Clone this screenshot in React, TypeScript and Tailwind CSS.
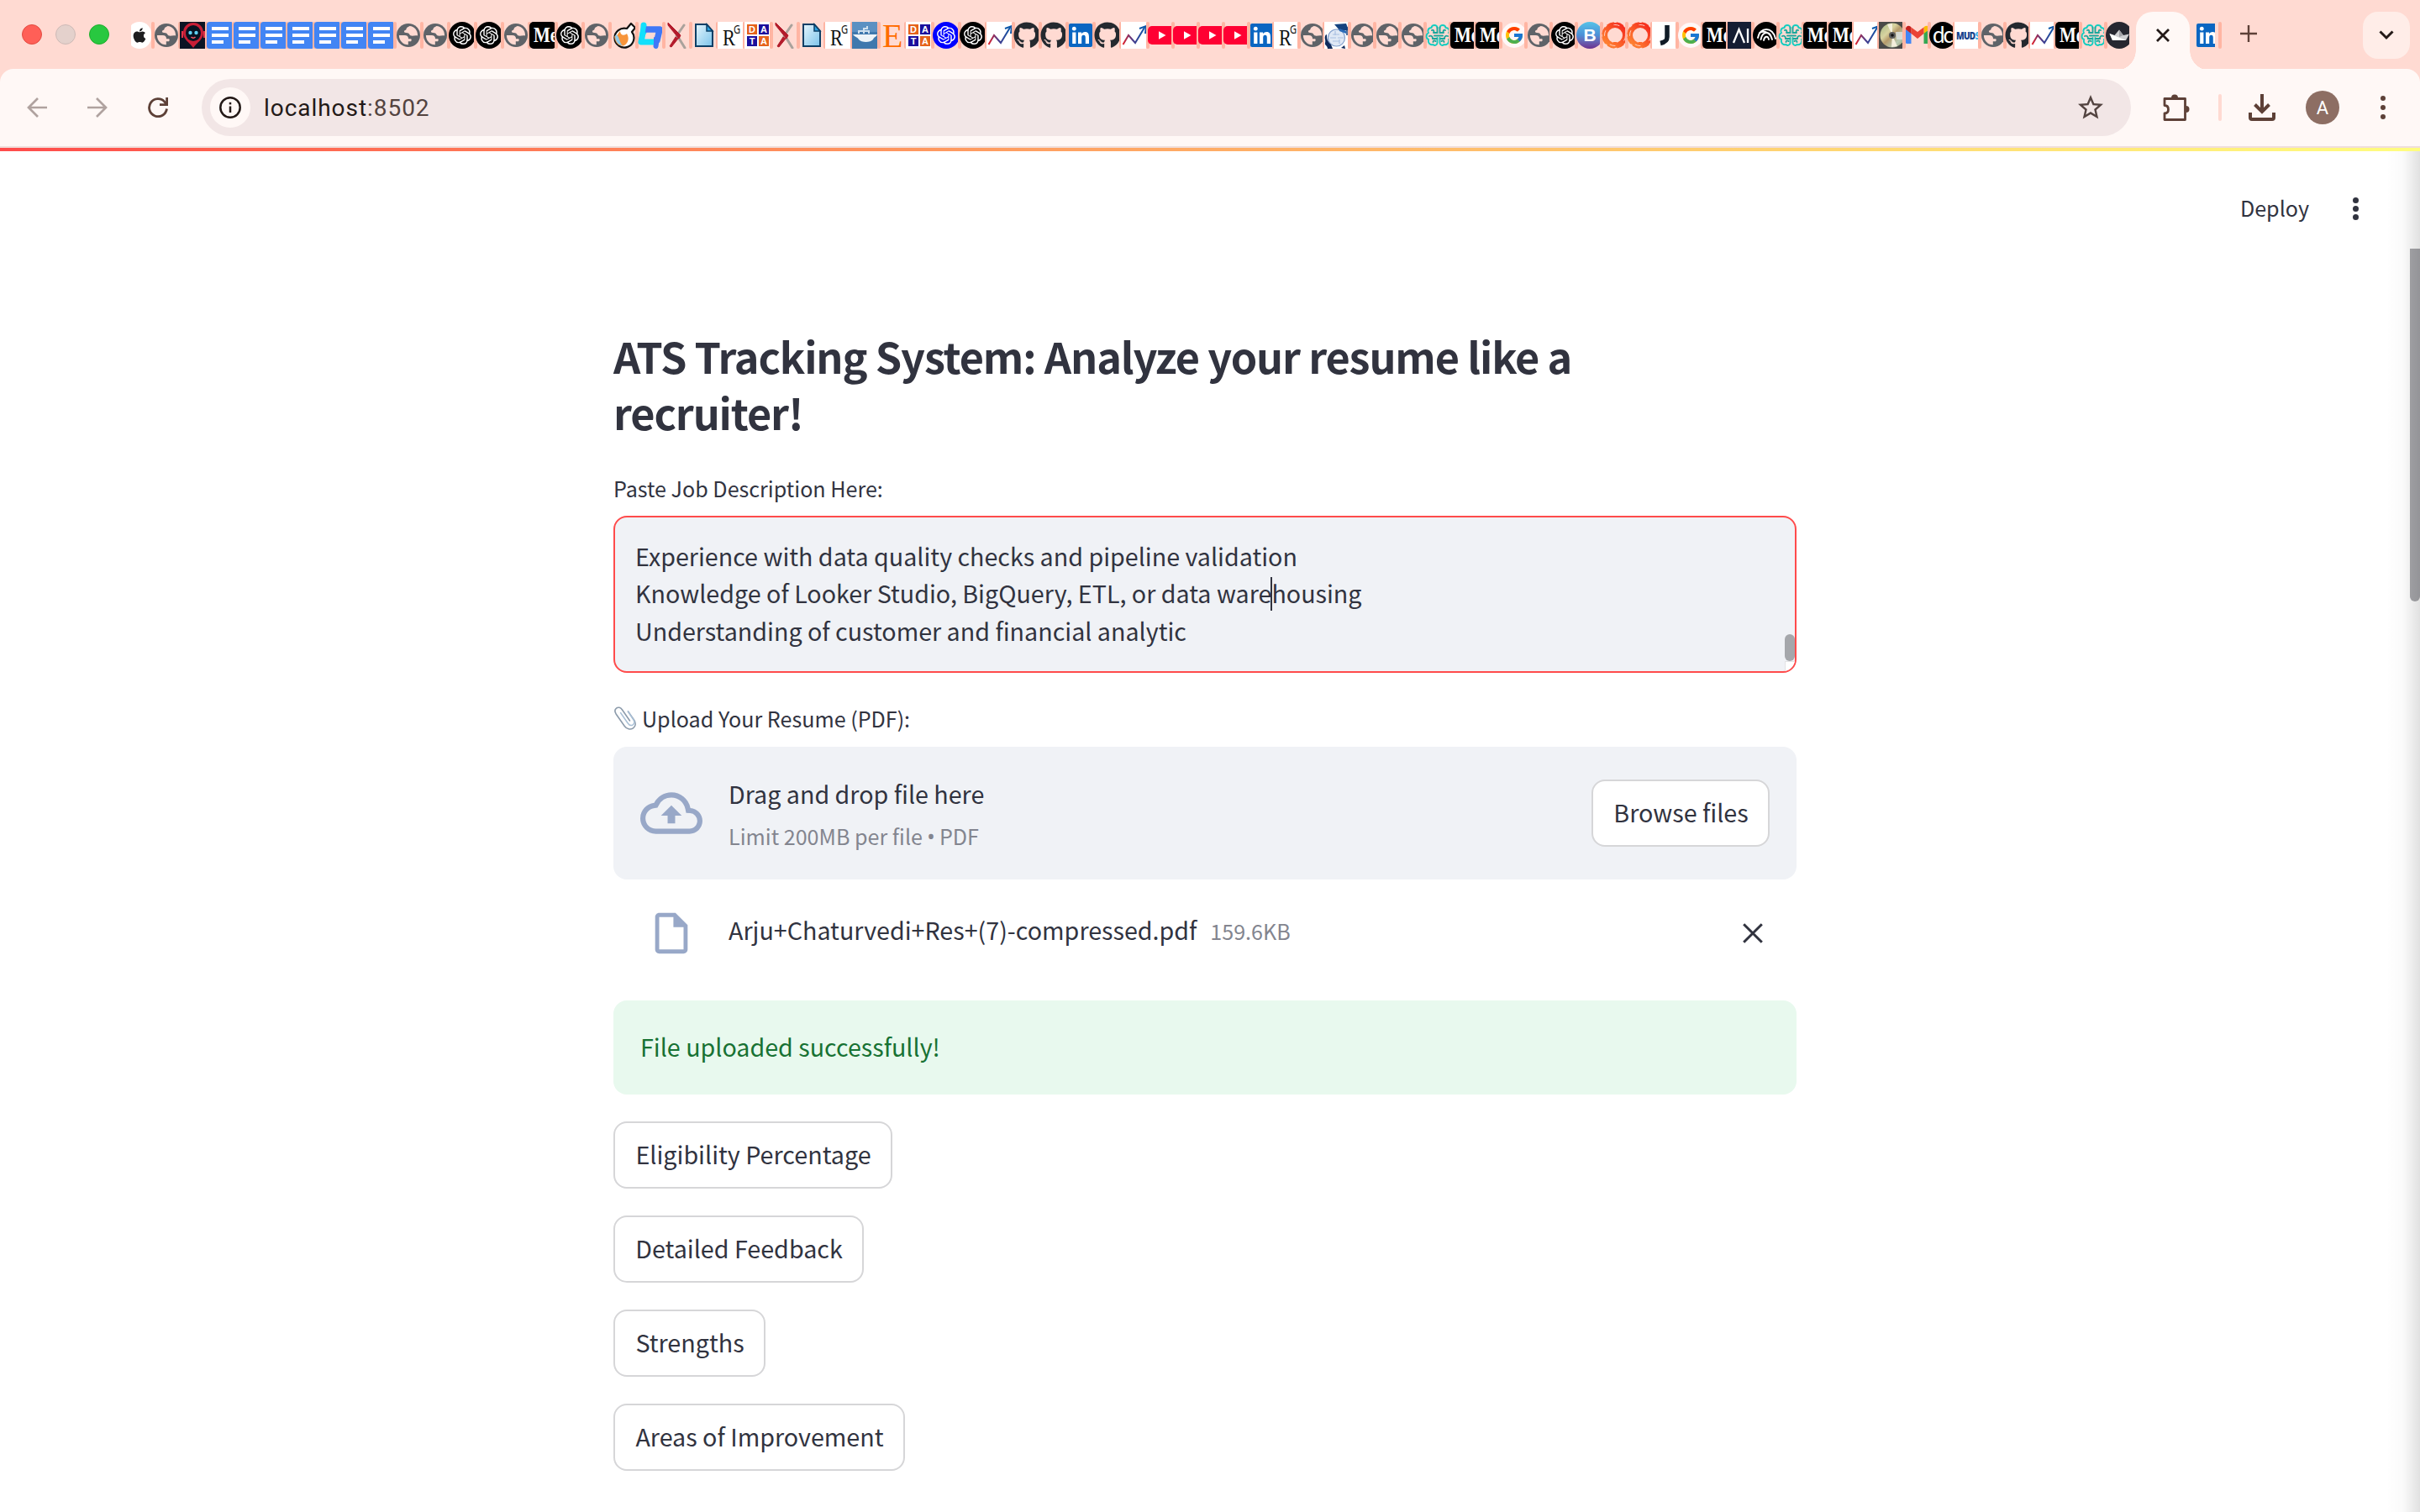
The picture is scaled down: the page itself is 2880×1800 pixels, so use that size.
import type { ReactNode } from 'react';
import { FaApple, FaGithub } from 'react-icons/fa';
import { FcGoogle } from 'react-icons/fc';
import { SiOpenai } from 'react-icons/si';
import { MdOutlineBackup, MdOutlineInsertDriveFile, MdStarOutline } from 'react-icons/md';

const SANS = "font-['Noto_Sans_CJK_SC',sans-serif]";

function Globe() {
  return (
    <svg viewBox="0 0 32 32" className="h-8 w-8">
      <circle cx="16" cy="16" r="14" fill="#5f6368" />
      <path d="M4.9 16h6.6c3 0 4.6 1.5 4.6 4.2h2.6c1.4 0 1.2 2.1.3 3.1h-3.200v3.900C10 27.400 5 22.800 4.900 16z" fill="#ffdad2" />
      <path d="M17.500 5c-2.600 1.200-4 2.400-4 3.700 0 1.200-2.600 1-2.600 2.600 0 1.700 1.400 1.900 4.100 1.900 2.400 0 2 2.900 4.400 3.400 2.400.5 4.600-1 7.700-.2C27.200 9.800 22.800 5.200 17.500 5z" fill="#ffdad2" />
    </svg>
  );
}

function AppleTab() {
  return (
    <div className="-ml-1 flex h-8 w-7 items-center justify-center rounded-full bg-white">
      <FaApple className="size-5 text-[#1d1d1f]" />
    </div>
  );
}

function Cyber() {
  return (
    <svg viewBox="0 0 32 32" className="h-8 w-8">
      <rect width="32" height="32" fill="#0b1424" />
      <path d="M16 1C8 1 4 7 4 13c0 8 7 11 12 18 5-7 12-10 12-18C28 7 24 1 16 1z" fill="#c81e36" />
      <ellipse cx="16" cy="13.500" rx="9" ry="9.500" fill="#071322" />
      <path d="M3 11v8M29 11v8" stroke="#e03348" strokeWidth="2" />
      <circle cx="12.500" cy="13" r="2.200" fill="#5fd0f5" />
      <circle cx="19.500" cy="13" r="2.200" fill="#5fd0f5" />
      <path d="M13.500 18q2.500 2.500 5 0" stroke="#ff5a6a" strokeWidth="1.500" fill="none" />
    </svg>
  );
}

function Docs() {
  return (
    <svg viewBox="0 0 32 32" className="h-8 w-8">
      <rect width="32" height="32" rx="3.500" fill="#4285f4" />
      <path d="M6 6h20v4H6zM6 14h20v4H6zM6 22h14v4H6z" fill="#fff" />
    </svg>
  );
}

function OpenAI({ blue = false }: { blue?: boolean }) {
  return (
    <div className={`flex h-8 w-8 shrink-0 items-center justify-center rounded-full ${blue ? 'bg-[#0000ff]' : 'bg-black'}`}>
      <SiOpenai className="size-[22px] text-white" />
    </div>
  );
}

function Medium() {
  return (
    <div className="h-8 w-8 shrink-0 overflow-hidden rounded-[5px] bg-black pl-[5px] font-['Liberation_Serif',serif] text-[21px] leading-8 font-bold text-white">
      <span className="block w-12 scale-y-120">Me</span>
    </div>
  );
}

function Flask() {
  return (
    <svg viewBox="0 0 32 32" className="h-8 w-8">
      <path d="M20 8l5-6 5 5-4 5a11.500 11.500 0 1 1-6-4z" fill="#fff" stroke="#111" strokeWidth="2.200" strokeLinejoin="round" />
      <path d="M5 17c3 2 4-3 7-6 0 5 5 6 8 3 3 5 2 11-3 14-6 2-11-2-12-11z" fill="#f7953b" />
      <path d="M6 16c3-1 4 2 5 5s2 6 4 7c-5 0-9-4-9-12z" fill="#8ecbea" />
    </svg>
  );
}

function CyanLoop() {
  return (
    <svg viewBox="0 0 32 32" className="h-8 w-8">
      <path d="M8 4v8M8 8L5 24h17" fill="none" stroke="#12e0fb" strokeWidth="7" strokeLinejoin="round" strokeLinecap="round" />
      <path d="M7 9h20l-3 13h-4" fill="none" stroke="#3f78f7" strokeWidth="7.500" strokeLinejoin="round" />
      <path d="M23.500 22l-1 7" fill="none" stroke="#3f78f7" strokeWidth="6" strokeLinecap="round" />
      <path d="M8 5L5 24h12" fill="none" stroke="#12e0fb" strokeWidth="6" strokeLinejoin="round" strokeLinecap="round" />
    </svg>
  );
}

function ArxivX() {
  return (
    <svg viewBox="0 0 32 32" className="h-8 w-8">
      <path d="M24 4L15 17M17 18l8 13" stroke="#aaa29c" strokeWidth="3" strokeLinecap="round" fill="none" />
      <path d="M5 1l15 15-2 4L5 4zM14 18l3 2L9 30l-2-1z" fill="#b31b2b" stroke="#b31b2b" strokeWidth="1" />
    </svg>
  );
}

function Page() {
  return (
    <svg viewBox="0 0 32 32" className="h-8 w-8">
      <defs>
        <linearGradient id="pg" x1="0" y1="0" x2="1" y2="1">
          <stop offset="0" stopColor="#e4f5fd" />
          <stop offset="1" stopColor="#7cc3ea" />
        </linearGradient>
      </defs>
      <path d="M6 3h13l7 8v18H6z" fill="url(#pg)" stroke="#0d3f66" strokeWidth="2" />
      <path d="M19 3v8h7z" fill="#2ba2e0" stroke="#0d3f66" strokeWidth="1.500" />
    </svg>
  );
}

function ResearchGate() {
  return (
    <div className="flex h-8 w-8 shrink-0 bg-white pl-1.5 font-['Liberation_Serif',serif] text-[#111]">
      <span className="w-[15px] origin-left scale-x-80 text-[28px] leading-[38px]">R</span>
      <span className="-ml-0.5 w-2 origin-left scale-x-80 font-['Noto_Sans',sans-serif] text-[14px] leading-[18px]">G</span>
    </div>
  );
}

function DataTiles() {
  return (
    <div className="grid h-8 w-8 shrink-0 grid-cols-[12px_12px] grid-rows-[12px_12px] content-center justify-center gap-0.5 bg-white text-center font-['Liberation_Sans',sans-serif] text-[11px] leading-3 font-bold text-white">
      <span className="bg-[#e5621b]">D</span>
      <span className="bg-[#1b0f9c]">A</span>
      <span className="bg-[#1b0f9c]">T</span>
      <span className="bg-[#e5621b]">A</span>
    </div>
  );
}

function Ship() {
  return (
    <svg viewBox="0 0 32 32" className="h-8 w-8">
      <rect width="32" height="32" fill="#3f78ad" />
      <rect width="32" height="12" fill="#5b90c2" />
      <path d="M1 15h29c-1 3-4 3-5 6-3 4-14 4-17 0-1-3-5-3-7-6z" fill="#eef4f8" />
      <path d="M14 14V8h4V5M8 14v-3h12v3" stroke="#cfe0ee" strokeWidth="2" fill="none" />
    </svg>
  );
}

function Elsevier() {
  return (
    <div className="h-8 w-8 shrink-0 pl-1 font-['Liberation_Serif',serif] text-[40px] leading-[34px] text-[#ff6c00]">E</div>
  );
}

function Chart() {
  return (
    <svg viewBox="0 0 32 32" className="h-8 w-8 bg-white">
      <defs>
        <linearGradient id="cg" x1="0" y1="0" x2="1" y2="0">
          <stop offset="0" stopColor="#e0212b" />
          <stop offset="0.450" stopColor="#4a3b8c" />
          <stop offset="1" stopColor="#0a56a8" />
        </linearGradient>
      </defs>
      <path d="M2.500 27L9 16l8 9L28.500 6" fill="none" stroke="url(#cg)" strokeWidth="2" />
      <path d="M22 8l8-3-1 9" fill="none" stroke="#0a56a8" strokeWidth="2" />
    </svg>
  );
}

function Github() {
  return <FaGithub className="size-8 shrink-0 text-[#24292f]" />;
}

function Linkedin() {
  return (
    <svg viewBox="0 0 32 32" className="h-8 w-8">
      <rect x="2" y="2" width="28" height="28" rx="2" fill="#0a66c2" />
      <path d="M6.200 12.500h4.200V26H6.200zM13 12.500h4v1.900c.8-1.400 2.200-2.300 4.200-2.300 4 0 4.800 2.700 4.800 6.200V26h-4.200v-6.800c0-1.600 0-3.500-2.200-3.500s-2.400 1.700-2.400 3.400V26H13z" fill="#fff" />
      <circle cx="8.300" cy="8.200" r="2.400" fill="#fff" />
    </svg>
  );
}

function Youtube() {
  return (
    <svg viewBox="0 0 32 32" className="h-8 w-8">
      <rect x="0" y="5" width="33" height="22" rx="5" fill="#ff0033" />
      <path d="M13 11.200v9.600l8.500-4.800z" fill="#fff" />
    </svg>
  );
}

function Scholar() {
  return (
    <svg viewBox="0 0 32 32" className="h-8 w-8">
      <rect width="32" height="32" fill="#fff" />
      <circle cx="14.500" cy="19" r="10" fill="#dfe8f5" stroke="#7f9dcb" strokeWidth="1.200" />
      <path d="M10 15h8M7 19h7M16 19h7M10 23h8M13 11v5M18 21v5" stroke="#a9bfe2" strokeWidth="1.200" />
      <path d="M12 3l14-1 3 8-10 1z" fill="#14427f" />
      <path d="M18 8l8 3v3l-8-3z" fill="#2a6ab8" />
      <path d="M27 6v10" stroke="#14427f" strokeWidth="1.500" />
      <path d="M1 17c1-2 2-3 2 0 0 5 2 7 5 10l2 5H4c0-4-4-4-3-7 1-3-1-5 0-8zM20 31l4-3 1 4z" fill="#0e2a5c" />
    </svg>
  );
}

function Brain() {
  return (
    <svg viewBox="0 0 32 32" className="h-8 w-8" fill="none" strokeWidth="1.900" strokeLinecap="round">
      <path d="M14.500 7c0-4-6.500-4-7 0-4 0-5 4-3.500 6C.5 15 1 20 4 21c-1 5 3 7 5.500 6 2 2 5 .5 5-2V19" stroke="#14cdc0" />
      <path d="M17.500 7c0-4 6.500-4 7 0 4 0 5 4 3.500 6 3.500 2 3 7 0 8 1 5-3 7-5.500 6-2 2-5 .5-5-2V19" stroke="#14cdc0" />
      <path d="M14.500 7v6h-4M17.500 7v6h4M11 16.500h10M8 10c2-1 3 1 2 3M24 10c-2-1-3 1-2 3M5 17c2-1 4 0 4 3h5M27 17c-2-1-4 0-4 3h-5M9.500 24c0-2 2-2 3-1M22.500 24c0-2-2-2-3-1" stroke="#1ba79c" />
    </svg>
  );
}

function Google() {
  return (
    <div className="flex h-8 w-8 shrink-0 items-center justify-center">
      <div className="flex size-[30px] items-center justify-center rounded-full bg-[#fff8f8]">
        <FcGoogle className="size-6" />
      </div>
    </div>
  );
}

function Bold() {
  return (
    <div className="h-8 w-8 shrink-0 rounded-full bg-linear-to-b from-[#55c3e8] via-[#4c8fd6] to-[#6b2f8f] text-center font-['Liberation_Sans',sans-serif] text-[21px] leading-8 font-bold text-white">
      B
    </div>
  );
}

function Ring() {
  return (
    <svg viewBox="0 0 32 32" className="h-8 w-8" fill="none">
      <defs>
        <linearGradient id="rg" x1="0" y1="1" x2="1" y2="0">
          <stop offset="0" stopColor="#ff8a33" />
          <stop offset="1" stopColor="#f4241c" />
        </linearGradient>
      </defs>
      <circle cx="16" cy="16" r="12" stroke="url(#rg)" strokeWidth="6" />
      <circle cx="16" cy="16" r="15" stroke="url(#rg)" strokeWidth="1.500" strokeDasharray="9 3" />
      <circle cx="16" cy="16" r="12.500" stroke="#ffdad2" strokeWidth="0.900" strokeDasharray="7 12" />
      <path d="M14 24h4v3h-4z" fill="#ff6a2a" />
    </svg>
  );
}

function JTab() {
  return (
    <svg viewBox="0 0 32 32" className="h-8 w-8 bg-white">
      <path d="M18 4v14c0 4-1.500 6-8 7.500" fill="none" stroke="#101b26" strokeWidth="5.500" />
    </svg>
  );
}

function AiTab() {
  return (
    <svg viewBox="0 0 32 32" className="h-8 w-8 bg-[#141d33]" fill="none" stroke="#fff" strokeWidth="2.300">
      <path d="M7 25l6.500-16L20 25M24 8v17" />
    </svg>
  );
}

function Waves() {
  return (
    <svg viewBox="0 0 32 32" className="h-8 w-8" fill="none" stroke="#fff" strokeWidth="1.900" strokeLinecap="round">
      <circle cx="16" cy="16" r="16" fill="#000" stroke="none" />
      <path d="M6 19C8 6 24 5 27 20M9.500 21c2-10 11-11 13-1M13 22c1-5 5-6 6-1M8 13c6-3 13 0 15 8" />
    </svg>
  );
}

function Disc() {
  return (
    <svg viewBox="0 0 32 32" className="h-8 w-8">
      <defs>
        <linearGradient id="dg" x1="0" y1="0" x2="1" y2="1">
          <stop offset="0" stopColor="#a3b884" />
          <stop offset="0.350" stopColor="#d8d3a0" />
          <stop offset="0.500" stopColor="#b59a6a" />
          <stop offset="0.750" stopColor="#b9ccb4" />
          <stop offset="1" stopColor="#8f8a5a" />
        </linearGradient>
      </defs>
      <rect width="32" height="32" fill="#4a4a48" />
      <circle cx="16" cy="16" r="14.500" fill="url(#dg)" />
      <path d="M16 16L10 3l6-1zM16 16l6 13-7 1z" fill="#f3efdc" />
      <path d="M20 12h9v9h-8z" fill="#dfe3e4" opacity="0.800" />
      <circle cx="16" cy="16" r="4" fill="#5c5c5c" />
      <circle cx="16" cy="16" r="1.800" fill="#111" />
    </svg>
  );
}

function Gmail() {
  return (
    <svg viewBox="0 0 32 32" className="h-8 w-8">
      <path d="M2 9v15.500A1.500 1.500 0 0 0 3.500 26H8.500V13z" fill="#4285f4" />
      <path d="M23.500 26h5a1.500 1.500 0 0 0 1.500-1.500V9l-6.500 4z" fill="#34a853" />
      <path d="M23.500 6.500V14l6.500-5V8c0-3-3.500-4.300-5.500-2.500z" fill="#fbbc04" />
      <path d="M8.500 14V6.500L16 12l7.500-5.500V14L16 20z" fill="#ea4335" />
      <path d="M2 8v1l6.500 5V6.500l-1-1C5.500 3.700 2 5 2 8z" fill="#c5221f" />
    </svg>
  );
}

function Dc() {
  return (
    <div className="h-8 w-8 shrink-0 rounded-full bg-black pl-1 font-['Lato',sans-serif] text-[26px] leading-[31px] tracking-[-2px] text-white">dc</div>
  );
}

function Muds() {
  return (
    <div className="h-8 w-8 shrink-0 bg-white pl-0.5 font-['Open_Sans',sans-serif] text-[10px] leading-8 font-extrabold tracking-[-0.700px] text-[#16408a]">
      <span className="block scale-y-120">MUD<span className="text-[#3fb5e8]">S</span></span>
    </div>
  );
}

function Crown() {
  return (
    <svg viewBox="0 0 32 32" className="h-8 w-8">
      <circle cx="16" cy="16" r="16" fill="#262730" />
      <path d="M4.500 14l6 2 5.500-6.500 5 6.500 7-1.500-4 7.500H8z" fill="#cfcfd2" />
      <path d="M4.500 14L24 22H8z" fill="#fff" />
      <path d="M16 9.500l5 6.500-5 2z" fill="#a0a0a5" />
    </svg>
  );
}

const wideTabs: ReactNode[] = [
  <Globe />, <Cyber />, <Docs />, <Docs />, <Docs />, <Docs />, <Docs />, <Docs />, <Docs />,
  <Globe />, <Globe />, <OpenAI />, <OpenAI />, <Globe />, <Medium />, <OpenAI />, <Globe />,
  <Flask />, <CyanLoop />, <ArxivX />, <Page />, <ResearchGate />, <DataTiles />, <ArxivX />,
  <Page />, <ResearchGate />, <Ship />, <Elsevier />, <DataTiles />, <OpenAI blue />, <OpenAI />,
  <Chart />, <Github />, <Github />, <Linkedin />, <Github />, <Chart />,
];

const narrowTabs: ReactNode[] = [
  <Youtube />, <Youtube />, <Youtube />, <Youtube />, <Linkedin />, <ResearchGate />, <Globe />,
  <Scholar />, <Globe />, <Globe />, <Globe />, <Brain />, <Medium />, <Medium />, <Google />,
  <Globe />, <OpenAI />, <Bold />, <Ring />, <Ring />, <JTab />, <Google />, <Medium />, <AiTab />,
  <Waves />, <Brain />, <Medium />, <Medium />, <Chart />, <Disc />, <Gmail />, <Dc />, <Muds />,
  <Globe />, <Github />, <Chart />, <Medium />, <Brain />, <Crown />,
];

function Tab({ children, narrow = false }: { children: ReactNode; narrow?: boolean }) {
  return (
    <div className={`flex h-8 shrink-0 ${narrow ? 'w-[30px]' : 'w-8'}`}>
      <div className="-mx-0.5 h-8 w-1 shrink-0 rounded-sm bg-[#ffb5a3]" />
      <div className={`relative h-8 shrink-0 overflow-hidden ${narrow ? 'w-7' : 'w-[30px]'}`}>
        <div className="flex w-8">{children}</div>
      </div>
    </div>
  );
}

function TabStrip() {
  return (
    <div className="flex h-[82px] w-full bg-[#ffdad2]">
      <div className="mt-[29px] ml-[26px] flex gap-4">
        <div className="size-6 rounded-full border border-[#e24b41] bg-[#ff5f57]" />
        <div className="size-6 rounded-full border border-[#cdbab6] bg-[#e4d1cc]" />
        <div className="size-6 rounded-full border border-[#1dad2b] bg-[#28c840]" />
      </div>
      <div className="mt-[26px] ml-[26px] w-[26px] overflow-hidden">
        <AppleTab />
      </div>
      <div className="mt-[26px] flex">
        {wideTabs.map((icon, i) => (
          <Tab key={i}>{icon}</Tab>
        ))}
        {narrowTabs.map((icon, i) => (
          <Tab key={i} narrow>{icon}</Tab>
        ))}
      </div>
      <div className="-mx-[18px] mt-3.5 flex items-end">
        <div className="h-[22px] w-6 bg-[radial-gradient(circle_at_0_0,transparent_23.500px,#fff8f6_24px)]" />
        <div className="flex h-[68px] w-16 items-center justify-center rounded-t-[20px] bg-[#fff8f6] pb-3">
          <svg viewBox="0 0 16 16" className="size-4" stroke="#231917" strokeWidth="2.800">
            <path d="M1 1l14 14M15 1L1 15" />
          </svg>
        </div>
        <div className="h-[22px] w-6 bg-[radial-gradient(circle_at_100%_0,transparent_23.500px,#fff8f6_24px)]" />
      </div>
      <div className="mt-[26px] flex">
        <div className="relative w-6 overflow-hidden">
          <div className="w-8"><Linkedin /></div>
        </div>
        <div className="ml-1 h-8 w-1 rounded-sm bg-[#ffb5a3]" />
      </div>
      <svg viewBox="0 0 20 20" className="mt-[30px] ml-[22px] size-5" stroke="#5d4037" strokeWidth="2.400">
        <path d="M10 0v20M0 10h20" />
      </svg>
      <div className="mt-3.5 mr-3 ml-auto flex size-14 items-center justify-center rounded-[18px] bg-[#ffede8]">
        <svg viewBox="0 0 18 12" className="h-3 w-[18px]" fill="none" stroke="#231917" strokeWidth="3">
          <path d="M1.500 1.500L9 9l7.500-7.500" />
        </svg>
      </div>
    </div>
  );
}

function Toolbar() {
  return (
    <div className="bg-[#ffdad2]">
      <div className="flex h-[92px] items-center rounded-t-[16px] bg-[#fff8f6]">
        <svg viewBox="0 0 24 24" className="ml-8 size-6" fill="none" stroke="#b0a29f" strokeWidth="2.700">
          <path d="M24 12H2M13 1L2 12l11 11" />
        </svg>
        <svg viewBox="0 0 24 24" className="ml-12 size-6" fill="none" stroke="#b0a29f" strokeWidth="2.700">
          <path d="M0 12h22M11 1l11 11-11 11" />
        </svg>
        <svg viewBox="0 0 24 24" className="ml-12 size-6" fill="none" stroke="#5d4037" strokeWidth="2.800">
          <path d="M22.500 13.500A10.500 10.500 0 1 1 20 5.300l2 2.700" />
          <path d="M22.600 0v8.600H14" />
        </svg>
        <div className="ml-10 flex h-[68px] w-[2296px] items-center rounded-full bg-[#f2e6e6] pr-[30px] pl-2.5">
          <div className="flex size-12 items-center justify-center rounded-full bg-[#fff8f6]">
            <svg viewBox="0 0 26 26" className="size-[26px]" fill="none" stroke="#231917" strokeWidth="2.500">
              <circle cx="13" cy="13" r="11.700" />
              <path d="M13 11.500V19" />
              <path d="M13 6.800v2.600" />
            </svg>
          </div>
          <div className="mt-0.5 ml-4 font-['Roboto',sans-serif] text-[28px] leading-10 tracking-[0.950px] text-[#231917]">
            localhost<span className="text-[#534340]">:8502</span>
          </div>
          <MdStarOutline className="ml-auto size-9 text-[#534340]" />
        </div>
        <svg viewBox="0 0 32 32" className="ml-[38px] size-8" fill="none">
          <path d="M2 5.500h24.500v25H2V23c3 0 4.500-2 4.500-4.700S5 13.500 2 13.500z" stroke="#5d4037" strokeWidth="2.800" strokeLinejoin="round" />
          <path d="M10 4.500a4 4 0 0 1 8 0zM27.500 14a4 4 0 0 1 0 8z" fill="#5d4037" />
        </svg>
        <div className="ml-[34px] h-8 w-1 rounded-sm bg-[#ffdad2]" />
        <svg viewBox="0 0 32 32" className="ml-8 size-8" fill="none" stroke="#5d4037" strokeWidth="4">
          <path d="M16 0v21M7.500 12.500L16 21l8.500-8.500" />
          <path d="M2 22v6q0 2 2 2h24q2 0 2-2v-6" />
        </svg>
        <div className="ml-9 size-10 rounded-full bg-[#8d6e63] text-center font-['Roboto',sans-serif] text-[22px] leading-[42px] text-white">A</div>
        <div className="ml-[49px] flex flex-col gap-[5px]">
          <div className="size-1.5 rounded-full bg-[#5d4037]" />
          <div className="size-1.5 rounded-full bg-[#5d4037]" />
          <div className="size-1.5 rounded-full bg-[#5d4037]" />
        </div>
      </div>
      <div className="h-0.5 bg-[#f0dedb]" />
    </div>
  );
}

function Paperclip() {
  return (
    <svg viewBox="0 0 28 28" className="size-7" fill="none" strokeLinecap="round">
      <path d="M19.500 17L10.500 4C8.500 1 5.500.5 3.500 2.200 1.500 3.800 1.500 6.500 3.300 9.200l10 14.300c2.500 3.500 7 4.500 10.200 2.300 3-2 3.500-5.800 1.300-9.300L17.500 6" stroke="#8c9bab" strokeWidth="1.600" />
      <path d="M17.500 6l6.500 10c1.500 2.500 1 4.500-.8 5.800-2 1.300-4.300.7-6-1.800L8.500 7.500" stroke="#a9c0d6" strokeWidth="1.500" />
    </svg>
  );
}

function ActionButton({ label, width }: { label: string; width: string }) {
  return (
    <button className={`flex h-20 shrink-0 items-center justify-center rounded-[16px] border-2 border-[#d6d6d8] bg-white pb-[3px] pl-px text-[28.700px] leading-[51px] whitespace-nowrap text-[#31333f] ${width}`}>
      {label}
    </button>
  );
}

export default function App() {
  return (
    <div className={`relative h-[1800px] w-[2880px] overflow-hidden bg-white text-[#31333f] ${SANS}`}>
      <TabStrip />
      <Toolbar />
      <div className="h-1 bg-linear-to-r from-[#ff4b4b] to-[#fffd80]" />
      <header className="flex h-[120px] items-start justify-end pr-[73px]">
        <span className="mt-[47px] text-[25.100px] leading-10">Deploy</span>
        <div className="mt-[54.500px] ml-[52px] flex flex-col gap-[3px]">
          <div className="size-[7px] rounded-full bg-[#31333f]" />
          <div className="size-[7px] rounded-full bg-[#31333f]" />
          <div className="size-[7px] rounded-full bg-[#31333f]" />
        </div>
      </header>

      <main className="ml-[730px] flex w-[1408px] flex-col">
        <h1 className="mt-[90px] text-[50.400px] leading-[67.200px] font-bold tracking-[-1.130px]">
          ATS Tracking System: Analyze your resume like a<br />recruiter!
        </h1>
        <label className="mt-[36.600px] text-[25.100px] leading-10">Paste Job Description Here:</label>
        <div className="relative mt-[13px] h-[187px] overflow-hidden rounded-[16px] border-2 border-[#ff4b4b] bg-[#f0f2f6] pt-[23.500px] pl-6 text-[28.670px] leading-[44.800px] whitespace-nowrap">
          <p>Experience with data quality checks and pipeline validation</p>
          <p>
            Knowledge of Looker Studio, BigQuery, ETL, or data ware
            <span className="-mx-px inline-block h-10 w-0.5 bg-[#31333f] align-[-9px] leading-none" />
            housing
          </p>
          <p>Understanding of customer and financial analytic</p>
          <div className="absolute right-0 bottom-3 h-8 w-3 rounded-full bg-[#a5a7ab]" />
          <div className="absolute right-0 bottom-0 h-3 w-3 border-t border-l border-[#e3e3e5] bg-white">
            <svg viewBox="0 0 12 12" className="size-3" stroke="#555" strokeWidth="1">
              <path d="M3 12L12 2M7 12l5-5" />
            </svg>
          </div>
        </div>

        <div className="mt-[34px] flex h-10 items-center gap-1.5 text-[25.100px] leading-10">
          <Paperclip />
          <span>Upload Your Resume (PDF):</span>
        </div>
        <section className="mt-3.5 flex h-[158px] items-center rounded-[16px] bg-[#f0f2f6] pr-8 pl-8">
          <MdOutlineBackup className="size-[74px] text-[#98a8c8]" />
          <div className="mt-1 ml-[31px]">
            <p className="text-[28.670px] leading-[51px]">Drag and drop file here</p>
            <p className="flex text-[25.100px] leading-[51px] text-[#83858f]">
              <span>Limit 200MB per file</span>
              <span className="w-5 text-center font-['Noto_Sans',sans-serif]">•</span>
              <span>PDF</span>
            </p>
          </div>
          <div className="ml-auto">
            <ActionButton label="Browse files" width="w-[212px]" />
          </div>
        </section>
        <div className="flex h-32 items-center pr-10">
          <MdOutlineInsertDriveFile className="ml-10 size-[58px] text-[#98a8c8]" />
          <span className="-mt-2.5 ml-[39px] text-[28.670px] leading-[51px]">Arju+Chaturvedi+Res+(7)-compressed.pdf</span>
          <span className="-mt-1.5 ml-4 text-[25.100px] leading-[51px] text-[#83858f]">159.6KB</span>
          <svg viewBox="0 0 24 24" className="ml-auto size-6" stroke="#31333f" strokeWidth="3">
            <path d="M1.200 1.200l21.600 21.600M22.800 1.200L1.200 22.800" />
          </svg>
        </div>
        <div className="mt-4 h-28 rounded-[16px] bg-[#e8f9ee] pt-[29px] pl-8 text-[28.670px] leading-[51px] text-[#177233]">
          File uploaded successfully!
        </div>
        <div className="mt-8 flex flex-col items-start gap-8">
          <ActionButton label="Eligibility Percentage" width="w-[332px]" />
          <ActionButton label="Detailed Feedback" width="w-[298px]" />
          <ActionButton label="Strengths" width="w-[181px]" />
          <ActionButton label="Areas of Improvement" width="w-[347px]" />
        </div>
      </main>

      <div className="absolute top-[296px] right-0 h-[420px] w-3 rounded-b-full bg-[#a8a8ac]" />
      <div className="absolute top-[180px] right-0 h-[1620px] w-10 bg-linear-to-r from-transparent via-black/2 to-black/12" />
    </div>
  );
}
